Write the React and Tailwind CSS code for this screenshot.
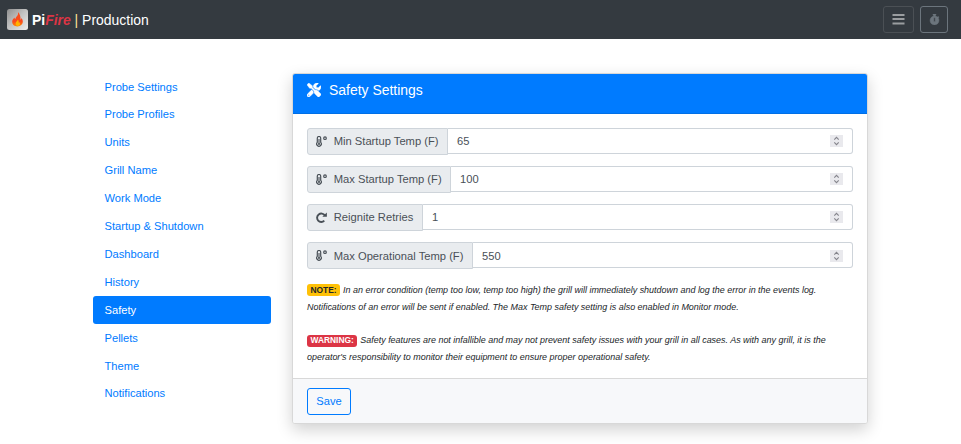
import { FaStopwatch, FaTools } from "react-icons/fa";

const navItems = [
  "Probe Settings", "Probe Profiles", "Units", "Grill Name", "Work Mode", "Startup & Shutdown",
  "Dashboard", "History", "Safety", "Pellets", "Theme", "Notifications",
];

function Thermometer() {
  return (
    <svg className="h-[11px] w-[11px] shrink-0" viewBox="0 0 11 11" fill="none" stroke="currentColor">
      <path d="M1.300 2.200a1.700 1.700 0 0 1 3.400 0V6.300a2.300 2.300 0 1 1-3.400 0z" strokeWidth="1.2" />
      <path d="M3 3v5" strokeWidth="1.1" />
      <circle cx="3" cy="8" r="1" fill="currentColor" stroke="none" />
      <circle cx="9" cy="2.200" r="1.300" strokeWidth="1.2" />
    </svg>
  );
}

function Redo() {
  return (
    <svg className="h-[11px] w-[11px] shrink-0" viewBox="0 0 11 11" fill="none">
      <path d="M8.800 3.400A4.200 4.200 0 1 0 8.300 8.700" stroke="currentColor" strokeWidth="1.900" />
      <path d="M10.900 0.400v4.300H6.300z" fill="currentColor" />
    </svg>
  );
}

const fields = [
  { label: "Min Startup Temp (F)", value: "65", width: "w-[141px]", Icon: Thermometer, nudge: "" },
  { label: "Max Startup Temp (F)", value: "100", width: "w-[144px]", Icon: Thermometer, nudge: "" },
  { label: "Reignite Retries", value: "1", width: "w-[116px]", Icon: Redo, nudge: "" },
  { label: "Max Operational Temp (F)", value: "550", width: "w-[166px]", Icon: Thermometer, nudge: "pt-px" },
];

function Logo() {
  return (
    <svg className="h-[21px] w-[21px]" viewBox="0 0 21 21">
      <defs>
        <linearGradient id="tile" x1="0" y1="0" x2="1" y2="1">
          <stop offset="0" stopColor="#8f8f8f" />
          <stop offset="0.5" stopColor="#c4c4c4" />
          <stop offset="1" stopColor="#eeeeee" />
        </linearGradient>
        <linearGradient id="flame" x1="0" y1="0" x2="0" y2="1">
          <stop offset="0" stopColor="#f4511e" />
          <stop offset="0.65" stopColor="#f8491f" />
          <stop offset="1" stopColor="#ff8a00" />
        </linearGradient>
      </defs>
      <rect width="21" height="21" rx="2.5" fill="url(#tile)" />
      <path d="M10.9 3c.5 2.2-.2 3.3-1.5 4.8-.7.8-1 1.5-1 2.3-.7-.4-.9-1-.8-1.7C6 9.7 5.200 11 5.200 12.700c0 2.800 2.200 4.700 5.200 4.700s5.400-2 5.400-4.800c0-1.500-.6-2.700-1.400-3.500 0 .9-.3 1.400-.9 1.700.3-3.200-.6-6-2.600-7.800z" fill="url(#flame)" />
      <path d="M10.9 10.500c.1 1.200-2.300 2.100-2.300 4 0 1.500 1 2.400 2.200 2.400s2.200-.9 2.200-2.200c0-.9-.4-1.400-.8-1.800-.1.500-.3.700-.5.800.1-1.300-.1-2.300-.8-3.200z" fill="#ffb300" />
    </svg>
  );
}

function Bars() {
  return (
    <svg className="h-[13px] w-[13px]" viewBox="0 0 13 13" fill="currentColor">
      <rect x="0.5" y="1" width="12" height="2" />
      <rect x="0.5" y="5" width="12" height="2" />
      <rect x="0.5" y="9.500" width="12" height="2" />
    </svg>
  );
}

function Spinner() {
  return (
    <span className="flex h-3 w-[13px] items-center justify-center bg-[#e9e9ed]">
      <svg className="h-3 w-[13px]" viewBox="0 0 13 12" fill="none" stroke="#85858c" strokeWidth="1.1">
        <path d="M4.300 4.600L6.500 2.400l2.200 2.200M4.300 7.400l2.200 2.200 2.200-2.200" />
      </svg>
    </span>
  );
}

function Field({ label, value, width, Icon, nudge }) {
  return (
    <div className="flex h-[27px] items-start text-[#495057]">
      <div className={`flex h-[27px] shrink-0 items-center rounded-l-[3px] border border-[#ced4da] bg-[#e9ecef] pl-2 ${width}`}>
        <Icon />
        <span className="ml-[6.7px] whitespace-nowrap text-[11.2px]">{label}</span>
      </div>
      <div className={`flex h-[26px] flex-1 items-center justify-between rounded-r-[3px] border border-l-0 border-[#ced4da] bg-white pl-[9px] pr-[9px] ${nudge}`}>
        <span>{value}</span>
        <Spinner />
      </div>
    </div>
  );
}

export default function App() {
  return (
    <div className="h-[444px] w-[961px] overflow-hidden bg-white font-['Liberation_Sans',Arial,sans-serif] text-[11.15px] leading-[16.7px] text-[#212529]">
      <nav className="flex h-[39px] items-center justify-between bg-[#343a40] pl-[7px] pr-[13px]">
        <div className="flex items-center">
          <Logo />
          <div className="ml-1 whitespace-nowrap pt-px text-[13.94px] leading-[21px] text-white">
            <b>Pi</b><b><i className="text-[#dc3545]">Fire</i></b> <span className="text-[#ffe69a]">|</span> Production
          </div>
        </div>
        <div className="flex gap-[6px]">
          <button className="flex h-[27px] w-[31px] items-center justify-center rounded-[3px] border border-[#4b5055] text-[#9a9da0]">
            <Bars />
          </button>
          <button className="flex h-[27px] w-[28px] items-center justify-center rounded-[3px] border border-[#6c757d] text-[#6c757d]">
            <FaStopwatch className="h-[11px] w-[11px] stroke-current stroke-[20px]" />
          </button>
        </div>
      </nav>

      <div className="flex items-start pl-[93px] pt-[34px]">
        <ul className="w-[178px]">
          {navItems.map((item) => (
            <li
              key={item}
              className={`flex h-[27.9px] items-center rounded-[3px] pl-[11.5px] ${item === "Safety" ? "bg-[#007bff] text-white" : "text-[#007bff]"}`}
            >
              {item}
            </li>
          ))}
        </ul>

        <section className="ml-[21px] flex h-[351px] w-[576px] flex-col overflow-hidden rounded-[3px] border border-[#d8d8d8] bg-white shadow-[0_6px_16px_rgba(0,0,0,0.18)]">
          <header className="flex h-[40px] items-start border-b border-[#006fe6] bg-[#007bff] pl-[14px] pt-2 text-[13.94px] leading-[17px] text-white">
            <FaTools className="mt-[1px] h-[14px] w-[14px] stroke-current stroke-[16px]" />
            <span className="ml-2">Safety Settings</span>
          </header>
          <div className="flex-1 px-[14px] pt-[14px]">
            <div className="flex flex-col gap-[11.15px]">
              {fields.map((f) => <Field key={f.label} {...f} />)}
            </div>
            <div className="mt-[12.55px] whitespace-nowrap text-[8.96px] italic leading-[16.7px]">
              <p>
                <b className="mr-[3px] inline-block rounded-[3px] bg-[#ffc107] px-[3.5px] py-[1.5px] text-[8.4px] not-italic leading-[9px]">NOTE:</b>
                In an error condition (temp too low, temp too high) the grill will immediately shutdown and log the error in the events log.
              </p>
              <p>Notifications of an error will be sent if enabled. The Max Temp safety setting is also enabled in Monitor mode.</p>
              <p className="mt-[16.7px]">
                <b className="mr-[3px] inline-block rounded-[3px] bg-[#dc3545] px-[3.5px] py-[1.5px] text-[8.4px] not-italic leading-[9px] text-white">WARNING:</b>
                Safety features are not infallible and may not prevent safety issues with your grill in all cases. As with any grill, it is the
              </p>
              <p>operator's responsibility to monitor their equipment to ensure proper operational safety.</p>
            </div>
          </div>
          <footer className="flex h-[45px] items-center border-t border-[#d8d8d8] bg-[#f7f8fa] pl-[14px]">
            <button className="flex h-[27px] w-[44px] items-center justify-center rounded-[3px] border border-[#007bff] text-[#007bff]">Save</button>
          </footer>
        </section>
      </div>
    </div>
  );
}
